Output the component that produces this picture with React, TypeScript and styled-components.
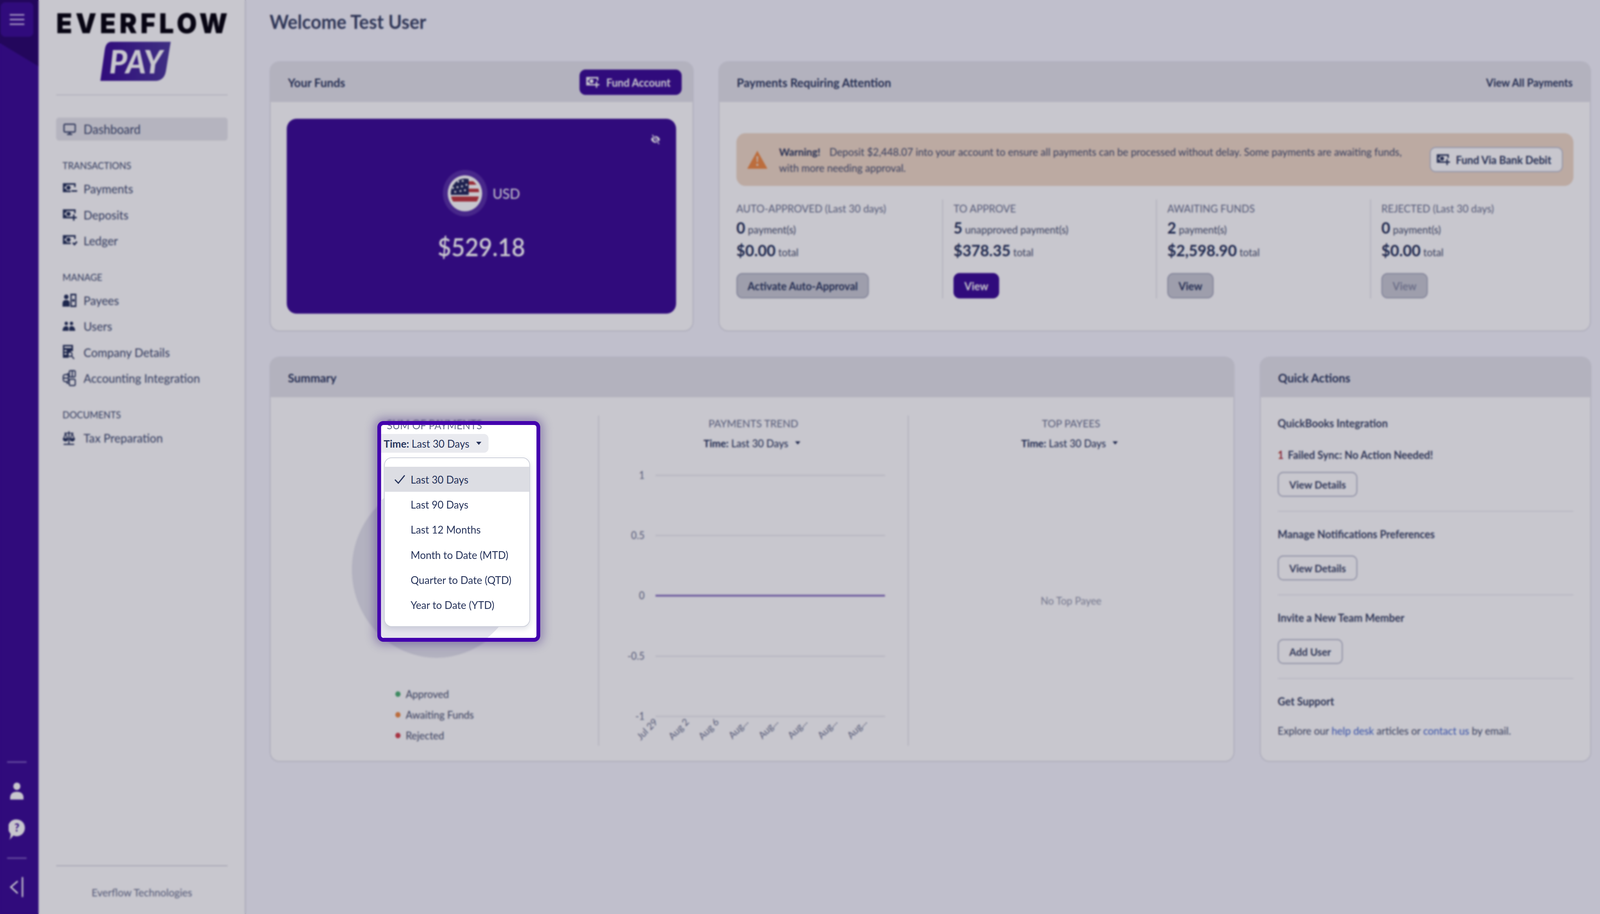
import styled, {createGlobalStyle} from "styled-components";

const GlobalStyle = createGlobalStyle`
    html, body {
        margin: 0;
        padding: 0;
        height: 100%;
        overflow: hidden;
        background: #f5f5fd;
        font-family: "Lato", "Liberation Sans", sans-serif;
        color: #25325a;
    }
    * {
        box-sizing: border-box;
    }
`

const PURPLE = "#3d0f96"
const TEXT = "#25325a"
const NAV_TEXT = "#414c70"
const GREY_TEXT = "#6c7390"
const STAGE_WIDTH = 4274

const MoneyIcon = ({kind, size = 40}: { kind: "minus" | "plus" | "check", size?: number }) => (
    <svg width={size} height={size * 0.8} viewBox="0 0 40 32" fill="currentColor">
        <path d="M1 2h34v10h-4V6H5v15h17v4H1z"/>
        <circle cx="16" cy="13.5" r="5.5"/>
        <path d="M5 6h6a6 6 0 0 1-6 6zM5 21v-6a6 6 0 0 1 6 6z"/>
        {kind === "plus" && <path d="M28 15h4v6h6v4h-6v6h-4v-6h-6v-4h6z"/>}
        {kind === "minus" && <path d="M24 20h15v4H24z"/>}
        {kind === "check" && <path d="M26 23l3-3 3 3 5-6 3 3-8 9z"/>}
    </svg>
)

const MonitorIcon = () => (
    <svg width="34" height="30" viewBox="0 0 34 30" fill="none" stroke="currentColor" strokeWidth="3.6">
        <rect x="2" y="2" width="30" height="20" rx="3"/>
        <path d="M17 22v5" strokeWidth="5"/>
        <path d="M10 28h14"/>
    </svg>
)

const PayeesIcon = () => (
    <svg width="38" height="36" viewBox="0 0 38 36" fill="currentColor">
        <circle cx="10" cy="9" r="6"/>
        <path d="M0 34v-8q0-9 10-9t9 9v8z"/>
        <path fillRule="evenodd" d="M21 1h16v34H21zM24.500 5v26h9V5z"/>
        <circle cx="29" cy="18" r="3.500"/>
    </svg>
)

const UsersIcon = () => (
    <svg width="34" height="26" viewBox="0 0 34 26" fill="currentColor">
        <circle cx="10" cy="6" r="4.500"/>
        <circle cx="24" cy="6" r="4.500"/>
        <path d="M0 25q1-12 10-12 5 0 6 5v7zM18 18q1-5 6-5 9 0 10 12H18z"/>
    </svg>
)

const CompanyIcon = () => (
    <svg width="34" height="40" viewBox="0 0 34 40" fill="currentColor">
        <path fillRule="evenodd" d="M1 1h27v16a11 11 0 0 0-11 17H1zM5 5v4h19V5zM5 14v4h6v-4zM5 22v4h6v-4z"/>
        <circle cx="20" cy="25" r="5.500" fill="none" stroke="currentColor" strokeWidth="3"/>
        <path d="M24 29l7 8" stroke="currentColor" strokeWidth="3"/>
    </svg>
)

const AccountingIcon = () => (
    <svg width="36" height="42" viewBox="0 0 36 42" fill="none" stroke="currentColor" strokeWidth="3">
        <rect x="18" y="2" width="16" height="16" rx="3"/>
        <rect x="18" y="24" width="16" height="16" rx="3"/>
        <rect x="2" y="12" width="14" height="18" rx="5"/>
        <path d="M2 21h14M26 2v16M18 10h-6M18 34h-6v-4"/>
    </svg>
)

const ScaleIcon = () => (
    <svg width="34" height="38" viewBox="0 0 34 38" fill="none" stroke="currentColor" strokeWidth="2.600">
        <path d="M17 2v32M3 35.500h28" strokeWidth="3"/>
        <path d="M5 7h24"/>
        <path d="M8 8l-5 13M8 8l5 13M26 8l-5 13M26 8l5 13"/>
        <path d="M2 21a6 6 0 0 0 12 0zM20 21a6 6 0 0 0 12 0z" fill="currentColor"/>
    </svg>
)

const PersonIcon = () => (
    <svg width="36" height="46" viewBox="0 0 36 46" fill="currentColor">
        <circle cx="18" cy="11" r="9.500"/>
        <path d="M0 45v-5q1-15 18-15t18 15v5z"/>
    </svg>
)

const HelpIcon = () => (
    <svg width="44" height="54" viewBox="0 0 44 54" fill="currentColor">
        <path d="M22 1a21 21 0 0 1 0 43q-5 0-9-2-4 5-11 11 4-7 3-16A21 21 0 0 1 22 1z"/>
        <text x="22" y="32" fontSize="29" fontWeight="900" textAnchor="middle" fill={PURPLE} fontFamily="Lato, sans-serif">?</text>
    </svg>
)

const CollapseIcon = () => (
    <svg width="38" height="52" viewBox="0 0 38 52" fill="none" stroke="currentColor" strokeWidth="4" strokeLinecap="round">
        <path d="M20 12L3 26l17 15M34 2v48"/>
    </svg>
)

const EyeOffIcon = () => (
    <svg width="26" height="26" viewBox="0 0 24 24" fill="currentColor">
        <path fillRule="evenodd" d="M12 4c6 0 10 5 11 8-1 3-5 8-11 8S2 15 1 12c1-3 5-8 11-8zm0 3.500a4.500 4.500 0 1 0 0 9 4.500 4.500 0 0 0 0-9z"/>
        <path d="M4 1l17 22" stroke={PURPLE} strokeWidth="5"/>
        <path d="M4 1l17 22" stroke="currentColor" strokeWidth="2.200"/>
    </svg>
)

const WarningIcon = () => (
    <svg width="54" height="46" viewBox="0 0 54 46">
        <path d="M27 0l27 46H0z" fill="#f08c46"/>
        <path d="M24.500 14h5l-1 15h-3z" fill="#f0dac7"/>
        <circle cx="27" cy="36" r="3" fill="#f0dac7"/>
    </svg>
)

const FlagIcon = () => (
    <svg width="80" height="80" viewBox="0 0 80 80">
        <defs>
            <clipPath id="flagClip"><circle cx="40" cy="40" r="38"/></clipPath>
        </defs>
        <g clipPath="url(#flagClip)">
            <rect width="80" height="80" fill="#fff"/>
            <path d="M40 9h40v9H40zM40 28h40v9H40zM0 48h80v13H0z" fill="#c23a40"/>
            <rect width="50" height="44" fill="#252a5c"/>
            {[[10, 14], [22, 10], [34, 8], [8, 26], [20, 24], [32, 22], [44, 18], [14, 36], [28, 34], [40, 32]].map(([cx, cy]) =>
                <circle key={`${cx}-${cy}`} cx={cx} cy={cy} r="2.600" fill="#fff"/>
            )}
        </g>
    </svg>
)

const PayBadge = () => (
    <svg width="188" height="100" viewBox="0 0 188 100">
        <defs>
            <linearGradient id="payGradient" x1="0" x2="1" y1="0" y2="0">
                <stop offset="0" stopColor="#3d0f96"/>
                <stop offset="1" stopColor="#4f3d9e"/>
            </linearGradient>
        </defs>
        <path d="M30 0H188L175 76Q170 100 146 100H0L12 20Q15 0 30 0z" fill="url(#payGradient)"/>
        <text x="95" y="81" fontSize="82" fontWeight="900" fontStyle="italic" textAnchor="middle" fill="#fff" fontFamily="Lato, sans-serif">PAY</text>
    </svg>
)

// the sandbox window is narrower than the design, so the stage is squeezed sideways to fit it
const Stage = styled.div`
    position: relative;
    width: ${STAGE_WIDTH}px;
    height: 2340px;
    transform-origin: 0 0;
    overflow: hidden;
`

const Page = styled.div`
    display: flex;
    width: 100%;
    height: 100%;
    background: #f5f5fd;
`

const Rail = styled.aside`
    position: relative;
    flex: 0 0 103px;
    display: flex;
    flex-direction: column;
    justify-content: space-between;
    background: ${PURPLE};
    color: #fff;

    &::before {
        content: "";
        position: absolute;
        left: 0;
        top: 0;
        width: 103px;
        height: 170px;
        background: #2c0a6e;
        clip-path: polygon(0 0, 100% 0, 100% 100%, 0 65%);
    }
`

const MenuButton = styled.div`
    position: relative;
    margin: 6px 0 0 2px;
    width: 87px;
    height: 88px;
    border-radius: 12px;
    background: ${PURPLE};
    display: flex;
    flex-direction: column;
    justify-content: center;
    align-items: center;
    gap: 8px;
`

const MenuLine = styled.span`
    width: 39px;
    height: 4px;
    background: #cbb8ec;
`

const RailBottom = styled.div`
    display: flex;
    flex-direction: column;
    align-items: center;
    padding: 0 13px 20px 0;
`

const RailRule = styled.div`
    width: 52px;
    height: 4px;
    margin: 22px 0;
    background: #7c5cc0;
`

const RailIcon = styled.div`
    width: 100%;
    height: 99px;
    display: flex;
    align-items: center;
    justify-content: center;
`

const Sidebar = styled.nav`
    flex: 0 0 554px;
    min-width: 0;
    display: flex;
    flex-direction: column;
    padding: 0 46px 0 47px;
    background: #fff;
    border-right: 3px solid #dadae4;
`

const Logo = styled.div`
    height: 244px;
    padding-top: 24px;
    display: flex;
    flex-direction: column;
    align-items: center;
    border-bottom: 2px solid #dddde4;
`

const LogoWord = styled.div`
    font-family: "Inter", "Liberation Sans", sans-serif;
    font-weight: 900;
    font-size: 70px;
    line-height: 72px;
    letter-spacing: 9.200px;
    margin-right: -9px;
    color: #08060f;
    white-space: nowrap;
`

const LogoPay = styled.div`
    margin: 11px 34px 0 0;
    line-height: 0;
`

const DashboardItem = styled.div`
    height: 59px;
    margin: 57px 0 4px;
    padding-left: 19px;
    display: flex;
    align-items: center;
    gap: 20px;
    border-radius: 8px;
    background: #e7e7ec;
    color: ${NAV_TEXT};
    font-size: 32px;
`

const NavSection = styled.div`
    margin-top: 45px;
`

const NavLabel = styled.div`
    height: 30px;
    padding-left: 17px;
    margin-bottom: 11px;
    font-size: 24.500px;
    line-height: 30px;
    color: ${NAV_TEXT};
`

const NavItem = styled.div`
    height: 66.5px;
    padding-left: 17px;
    display: flex;
    align-items: center;
    color: ${NAV_TEXT};
    font-size: 31px;
`

const NavIcon = styled.span`
    width: 56px;
    display: flex;
    color: #25325a;
`

const SidebarFoot = styled.div`
    margin-top: auto;
    height: 125px;
    padding-top: 49px;
    border-top: 3px solid #dddde4;
    text-align: center;
    font-size: 27.500px;
    line-height: 36px;
    color: ${GREY_TEXT};
`

const Main = styled.main`
    flex: 1;
    min-width: 0;
    padding: 25px 23px 0 63px;
`

const Welcome = styled.h1`
    margin: 0 0 72px;
    font-size: 49px;
    line-height: 60px;
    font-weight: 700;
    color: #3b4566;
`

const TopRow = styled.div`
    display: grid;
    grid-template-columns: 1133px 2331px;
    gap: 66px;
    height: 692px;
    margin-bottom: 64px;
`

const BottomRow = styled.div`
    display: grid;
    grid-template-columns: 2578px 886px;
    gap: 67px;
    height: 1038px;
`

const Card = styled.section`
    display: flex;
    flex-direction: column;
    overflow: hidden;
    background: #fff;
    border: 3px solid #e2e2ea;
    border-radius: 26px;
`

const CardHeader = styled.header`
    flex: 0 0 101px;
    padding: 0 46px;
    display: flex;
    align-items: center;
    justify-content: space-between;
    background: #e5e5eb;
`

const CardTitle = styled.h2`
    margin: 0;
    font-size: 31px;
    font-weight: 700;
    color: #2e3a60;
`

const HeaderLink = styled.a`
    font-size: 28px;
    font-weight: 700;
    color: #2e3a60;
`

const PrimaryButton = styled.button`
    display: flex;
    align-items: center;
    gap: 16px;
    height: 65px;
    padding: 0 30px 0 17px;
    margin-right: -17px;
    border: none;
    border-radius: 16px;
    background: ${PURPLE};
    color: #fff;
    font: 700 28px "Lato", sans-serif;
`

const FundsBody = styled.div`
    flex: 1;
    padding: 43px 44px 43px 43px;
    display: flex;
`

const Balance = styled.div`
    position: relative;
    flex: 1;
    display: flex;
    flex-direction: column;
    align-items: center;
    justify-content: center;
    gap: 38px;
    border-radius: 26px;
    background: ${PURPLE};
    color: #fff;
`

const EyeToggle = styled.span`
    position: absolute;
    top: 40px;
    right: 42px;
    display: flex;
`

const CurrencyRow = styled.div`
    display: flex;
    align-items: center;
    gap: 14px;
    font-size: 36px;
`

const FlagRing = styled.div`
    width: 119px;
    height: 119px;
    border-radius: 50%;
    background: #5a32a8;
    display: flex;
    align-items: center;
    justify-content: center;
`

const FlagDisc = styled.div`
    width: 92px;
    height: 92px;
    border-radius: 50%;
    background: #fff;
    display: flex;
    align-items: center;
    justify-content: center;
`

const Amount = styled.div`
    font-size: 63px;
    line-height: 80px;
    font-weight: 600;
`

const AttentionBody = styled.div`
    flex: 1;
    padding: 80px 44px 0 45px;
    display: flex;
    flex-direction: column;
`

const Alert = styled.div`
    height: 135px;
    padding: 0 28px 0 29px;
    display: flex;
    align-items: center;
    gap: 31px;
    border-radius: 24px;
    background: #f0dac7;
`

const AlertText = styled.div`
    flex: 1;
    font-size: 27.200px;
    line-height: 41px;
    color: #4a5270;
`

const AlertLead = styled.strong`
    margin-right: 24px;
    color: #2e3a60;
`

const WhiteButton = styled.button`
    flex: none;
    display: flex;
    align-items: center;
    gap: 14px;
    height: 65px;
    padding: 0 28px 0 15px;
    border: 3px solid #c0c3d2;
    border-radius: 16px;
    background: #fff;
    color: #2e3a60;
    font: 700 28px "Lato", sans-serif;
`

const Stats = styled.div`
    display: grid;
    grid-template-columns: 550px 571px 572px 1fr;
    height: 253px;
    margin-top: 35px;
`

const Stat = styled.div<{ $first?: boolean }>`
    display: flex;
    flex-direction: column;
    align-items: flex-start;
    padding-left: ${props => props.$first ? 0 : 28}px;
    border-left: ${props => props.$first ? "none" : "2px solid #dcdde4"};
`

const StatLabel = styled.div`
    font-size: 27.300px;
    line-height: 46px;
    color: ${GREY_TEXT};
`

const StatLine = styled.div<{ $height: number }>`
    line-height: ${props => props.$height}px;
    font-size: 27px;
    color: #4a5270;
`

const StatFigure = styled.b`
    font-size: 41px;
    color: ${TEXT};
    margin-right: 7px;
`

const GreyButton = styled.button<{ $disabled?: boolean }>`
    margin-top: auto;
    height: 65px;
    padding: 0 27px;
    border: 3px solid #abadbf;
    border-radius: 16px;
    background: #c9cbd4;
    color: ${props => props.$disabled ? "#8b8fa6" : "#2e3a60"};
    font: 700 28px "Lato", sans-serif;
`

const ViewButton = styled.button`
    margin-top: auto;
    height: 65px;
    width: 122px;
    border: none;
    border-radius: 16px;
    background: ${PURPLE};
    color: #fff;
    font: 700 28px "Lato", sans-serif;
`

const SummaryBody = styled.div`
    flex: 1;
    display: grid;
    grid-template-columns: 875px 827px 1fr;
    padding: 47px 0 44px;
`

const SummaryColumn = styled.div<{ $first?: boolean }>`
    position: relative;
    display: flex;
    flex-direction: column;
    align-items: center;
    border-left: ${props => props.$first ? "none" : "2px solid #dcdde4"};
`

const ColumnTitle = styled.div`
    font-size: 27.500px;
    line-height: 40px;
    color: ${GREY_TEXT};
`

const TimeFilter = styled.div`
    margin-top: 6px;
    height: 48px;
    padding-right: 8px;
    display: flex;
    align-items: center;
    font-size: 27px;
    color: ${TEXT};
`

const TimeLabel = styled.span`
    font-weight: 700;
    margin-right: 7px;
`

const Caret = styled.i`
    width: 0;
    height: 0;
    margin-left: 18px;
    border-left: 7px solid transparent;
    border-right: 7px solid transparent;
    border-top: 8px solid ${TEXT};
`

const Pie = styled.div`
    width: 452px;
    height: 452px;
    margin: 74px 0 0 10px;
    border-radius: 50%;
    background: #e4e4ed;
`

const Legend = styled.ul`
    list-style: none;
    width: 210px;
    margin: 66px 0 0;
    padding: 0;
`

const LegendItem = styled.li`
    height: 53px;
    display: flex;
    align-items: center;
    gap: 14px;
    font-size: 27px;
    white-space: nowrap;
    color: #4a5270;
`

const LegendDot = styled.i<{ $color: string }>`
    flex: none;
    width: 14px;
    height: 14px;
    border-radius: 50%;
    background: ${props => props.$color};
`

const ChartFrame = styled.div`
    margin-top: 6px;
    line-height: 0;
`

const EmptyNote = styled.div`
    flex: 1;
    display: flex;
    align-items: center;
    padding-top: 8px;
    font-size: 27px;
    color: #9599ad;
`

const QuickBody = styled.div`
    flex: 1;
    padding: 9px 45px 0;
`

const QuickSection = styled.div<{ $last?: boolean }>`
    padding: 41px 0 36px;
    border-bottom: ${props => props.$last ? "none" : "2px solid #e8e8ee"};
`

const QuickTitle = styled.div`
    font-size: 27.800px;
    line-height: 34px;
    font-weight: 700;
    color: #3b4566;
`

const FailedLine = styled.div`
    margin: 47px 0 26px;
    font-size: 27.800px;
    line-height: 34px;
    font-weight: 700;
    color: #3b4566;
`

const FailedCount = styled.span`
    color: #b23a42;
    margin-right: 11px;
`

const OutlineButton = styled.button`
    display: block;
    height: 64px;
    padding: 0 28px;
    border: 3px solid #bcbfcf;
    border-radius: 15px;
    background: #fff;
    color: #3b4566;
    font: 700 27px "Lato", sans-serif;
`

const SpacedButton = styled(OutlineButton)`
    margin-top: 37px;
`

const SupportLine = styled.div`
    margin-top: 41px;
    font-size: 27.200px;
    line-height: 34px;
    color: #4a5270;
`

const SupportLink = styled.a`
    color: #4a6bd0;
`

const Scrim = styled.div`
    position: absolute;
    inset: 0;
    background: rgba(5, 0, 30, 0.22);
    backdrop-filter: blur(2px);
`

const Spotlight = styled.div`
    position: absolute;
    left: 1008px;
    top: 1078px;
    width: 435px;
    height: 565px;
    border: 10px solid #4300ae;
    border-radius: 16px;
    background: #fff;
    overflow: hidden;
    box-shadow: 0 0 24px 8px rgba(50, 20, 120, 0.35);
`

const SpotPie = styled.div`
    position: absolute;
    left: -80px;
    top: 140px;
    width: 452px;
    height: 452px;
    border-radius: 50%;
    background: #e4e4ed;
`

const SpotTitle = styled.div`
    position: relative;
    margin-top: -19px;
    text-align: center;
    padding-right: 130px;
    font-size: 27.500px;
    line-height: 40px;
    color: ${GREY_TEXT};
`

const SpotFilter = styled.div`
    position: relative;
    width: 287px;
    height: 48px;
    margin-top: 2px;
    padding-left: 7px;
    display: flex;
    align-items: center;
    border-radius: 0 12px 12px 0;
    background: #e9eaef;
    font-size: 27.300px;
    color: ${TEXT};
`

const TimeMenu = styled.ul`
    position: relative;
    list-style: none;
    width: 390px;
    height: 434px;
    margin: 12px 0 0 8px;
    padding: 22px 0 0;
    background: #fff;
    border: 2px solid #cfd2dc;
    border-radius: 20px;
    box-shadow: 0 6px 14px rgba(40, 50, 90, 0.14);
`

const TimeOption = styled.li<{ $selected?: boolean }>`
    height: 64.300px;
    padding-left: 69px;
    position: relative;
    display: flex;
    align-items: center;
    font-size: 27.300px;
    color: ${TEXT};
    background: ${props => props.$selected ? "#dcdde3" : "transparent"};
`

const TickMark = styled.svg`
    position: absolute;
    left: 25px;
    top: 20px;
`

const timeOptions = ["Last 30 Days", "Last 90 Days", "Last 12 Months", "Month to Date (MTD)", "Quarter to Date (QTD)", "Year to Date (YTD)"]

const navGroups = [
    {
        title: "TRANSACTIONS", items: [
            {label: "Payments", icon: <MoneyIcon kind="minus"/>},
            {label: "Deposits", icon: <MoneyIcon kind="plus"/>},
            {label: "Ledger", icon: <MoneyIcon kind="check"/>},
        ]
    },
    {
        title: "MANAGE", items: [
            {label: "Payees", icon: <PayeesIcon/>},
            {label: "Users", icon: <UsersIcon/>},
            {label: "Company Details", icon: <CompanyIcon/>},
            {label: "Accounting Integration", icon: <AccountingIcon/>},
        ]
    },
    {
        title: "DOCUMENTS", items: [
            {label: "Tax Preparation", icon: <ScaleIcon/>},
        ]
    },
]

const yTicks = [
    {label: "1", y: 53},
    {label: "0.5", y: 207},
    {label: "-0.5", y: 516},
    {label: "-1", y: 670},
]

const xTicks = [
    {label: "Jul 29", x: 158},
    {label: "Aug 2", x: 242},
    {label: "Aug 6", x: 322},
    {label: "Aug...", x: 400},
    {label: "Aug...", x: 480},
    {label: "Aug...", x: 558},
    {label: "Aug...", x: 638},
    {label: "Aug...", x: 717},
]

const TrendChart = () => (
    <svg width="825" height="735" viewBox="0 0 825 735" fontFamily="Lato, sans-serif">
        {yTicks.map(t => <g key={t.label}>
            <line x1="151" x2="764" y1={t.y} y2={t.y} stroke="#eeeef2" strokeWidth="4"/>
            <text x="122" y={t.y + 9} fontSize="26" fill={GREY_TEXT} textAnchor="end">{t.label}</text>
        </g>)}
        <line x1="151" x2="764" y1="361" y2="361" stroke="#8e78c4" strokeWidth="5"/>
        <text x="122" y="370" fontSize="26" fill={GREY_TEXT} textAnchor="end">0</text>
        {xTicks.map((t, i) =>
            <text key={i} x={t.x} y="686" fontSize="25" fill={GREY_TEXT} textAnchor="end"
                  transform={`rotate(-45 ${t.x} 686)`}>{t.label}</text>
        )}
    </svg>
)

const Stripe = ({title, figure, figureNote, amount}: { title: string, figure: string, figureNote: string, amount: string }) => <>
    <StatLabel>{title}</StatLabel>
    <StatLine $height={52}><StatFigure>{figure}</StatFigure>{figureNote}</StatLine>
    <StatLine $height={54}><StatFigure>{amount}</StatFigure>total</StatLine>
</>

const App = () => {
    return <>
        <GlobalStyle/>
        <Stage style={{transform: `scaleX(${window.innerWidth / STAGE_WIDTH})`}}>
            <Page>
                <Rail>
                    <MenuButton>
                        <MenuLine/>
                        <MenuLine/>
                        <MenuLine/>
                    </MenuButton>
                    <RailBottom>
                        <RailRule/>
                        <RailIcon><PersonIcon/></RailIcon>
                        <RailIcon><HelpIcon/></RailIcon>
                        <RailRule/>
                        <RailIcon><CollapseIcon/></RailIcon>
                    </RailBottom>
                </Rail>
                <Sidebar>
                    <Logo>
                        <LogoWord>EVERFLOW</LogoWord>
                        <LogoPay><PayBadge/></LogoPay>
                    </Logo>
                    <DashboardItem><MonitorIcon/>Dashboard</DashboardItem>
                    {navGroups.map(group => <NavSection key={group.title}>
                        <NavLabel>{group.title}</NavLabel>
                        {group.items.map(item => <NavItem key={item.label}>
                            <NavIcon>{item.icon}</NavIcon>
                            {item.label}
                        </NavItem>)}
                    </NavSection>)}
                    <SidebarFoot>Everflow Technologies</SidebarFoot>
                </Sidebar>
                <Main>
                    <Welcome>Welcome Test User</Welcome>
                    <TopRow>
                        <Card>
                            <CardHeader>
                                <CardTitle>Your Funds</CardTitle>
                                <PrimaryButton><MoneyIcon kind="plus" size={38}/>Fund Account</PrimaryButton>
                            </CardHeader>
                            <FundsBody>
                                <Balance>
                                    <EyeToggle><EyeOffIcon/></EyeToggle>
                                    <CurrencyRow>
                                        <FlagRing><FlagDisc><FlagIcon/></FlagDisc></FlagRing>
                                        USD
                                    </CurrencyRow>
                                    <Amount>$529.18</Amount>
                                </Balance>
                            </FundsBody>
                        </Card>
                        <Card>
                            <CardHeader>
                                <CardTitle>Payments Requiring Attention</CardTitle>
                                <HeaderLink>View All Payments</HeaderLink>
                            </CardHeader>
                            <AttentionBody>
                                <Alert>
                                    <WarningIcon/>
                                    <AlertText>
                                        <AlertLead>Warning!</AlertLead>
                                        Deposit $2,448.07 into your account to ensure all payments can be processed without delay. Some payments are awaiting funds, with more needing approval.
                                    </AlertText>
                                    <WhiteButton><MoneyIcon kind="plus" size={38}/>Fund Via Bank Debit</WhiteButton>
                                </Alert>
                                <Stats>
                                    <Stat $first>
                                        <Stripe title="AUTO-APPROVED (Last 30 days)" figure="0" figureNote="payment(s)" amount="$0.00"/>
                                        <GreyButton>Activate Auto-Approval</GreyButton>
                                    </Stat>
                                    <Stat>
                                        <Stripe title="TO APPROVE" figure="5" figureNote="unapproved payment(s)" amount="$378.35"/>
                                        <ViewButton>View</ViewButton>
                                    </Stat>
                                    <Stat>
                                        <Stripe title="AWAITING FUNDS" figure="2" figureNote="payment(s)" amount="$2,598.90"/>
                                        <GreyButton>View</GreyButton>
                                    </Stat>
                                    <Stat>
                                        <Stripe title="REJECTED (Last 30 days)" figure="0" figureNote="payment(s)" amount="$0.00"/>
                                        <GreyButton $disabled>View</GreyButton>
                                    </Stat>
                                </Stats>
                            </AttentionBody>
                        </Card>
                    </TopRow>
                    <BottomRow>
                        <Card>
                            <CardHeader><CardTitle>Summary</CardTitle></CardHeader>
                            <SummaryBody>
                                <SummaryColumn $first>
                                    <ColumnTitle>SUM OF PAYMENTS</ColumnTitle>
                                    <TimeFilter/>
                                    <Pie/>
                                    <Legend>
                                        <LegendItem><LegendDot $color="#4fb174"/>Approved</LegendItem>
                                        <LegendItem><LegendDot $color="#f08c46"/>Awaiting Funds</LegendItem>
                                        <LegendItem><LegendDot $color="#d6434e"/>Rejected</LegendItem>
                                    </Legend>
                                </SummaryColumn>
                                <SummaryColumn>
                                    <ColumnTitle>PAYMENTS TREND</ColumnTitle>
                                    <TimeFilter><TimeLabel>Time:</TimeLabel>Last 30 Days<Caret/></TimeFilter>
                                    <ChartFrame><TrendChart/></ChartFrame>
                                </SummaryColumn>
                                <SummaryColumn>
                                    <ColumnTitle>TOP PAYEES</ColumnTitle>
                                    <TimeFilter><TimeLabel>Time:</TimeLabel>Last 30 Days<Caret/></TimeFilter>
                                    <EmptyNote>No Top Payee</EmptyNote>
                                </SummaryColumn>
                            </SummaryBody>
                        </Card>
                        <Card>
                            <CardHeader><CardTitle>Quick Actions</CardTitle></CardHeader>
                            <QuickBody>
                                <QuickSection>
                                    <QuickTitle>QuickBooks Integration</QuickTitle>
                                    <FailedLine><FailedCount>1</FailedCount>Failed Sync: No Action Needed!</FailedLine>
                                    <OutlineButton>View Details</OutlineButton>
                                </QuickSection>
                                <QuickSection>
                                    <QuickTitle>Manage Notifications Preferences</QuickTitle>
                                    <SpacedButton>View Details</SpacedButton>
                                </QuickSection>
                                <QuickSection>
                                    <QuickTitle>Invite a New Team Member</QuickTitle>
                                    <SpacedButton>Add User</SpacedButton>
                                </QuickSection>
                                <QuickSection $last>
                                    <QuickTitle>Get Support</QuickTitle>
                                    <SupportLine>Explore our <SupportLink>help desk</SupportLink> articles or <SupportLink>contact us</SupportLink> by email.</SupportLine>
                                </QuickSection>
                            </QuickBody>
                        </Card>
                    </BottomRow>
                </Main>
            </Page>
            <Scrim/>
            <Spotlight>
                <SpotPie/>
                <SpotTitle>SUM OF PAYMENTS</SpotTitle>
                <SpotFilter><TimeLabel>Time:</TimeLabel>Last 30 Days<Caret/></SpotFilter>
                <TimeMenu>
                    {timeOptions.map((option, i) => <TimeOption key={option} $selected={i === 0}>
                        {i === 0 && <TickMark width="30" height="24" viewBox="0 0 30 24" fill="none" stroke={TEXT} strokeWidth="3">
                            <path d="M2 13l9 9L28 2"/>
                        </TickMark>}
                        {option}
                    </TimeOption>)}
                </TimeMenu>
            </Spotlight>
        </Stage>
    </>
}

export default App
